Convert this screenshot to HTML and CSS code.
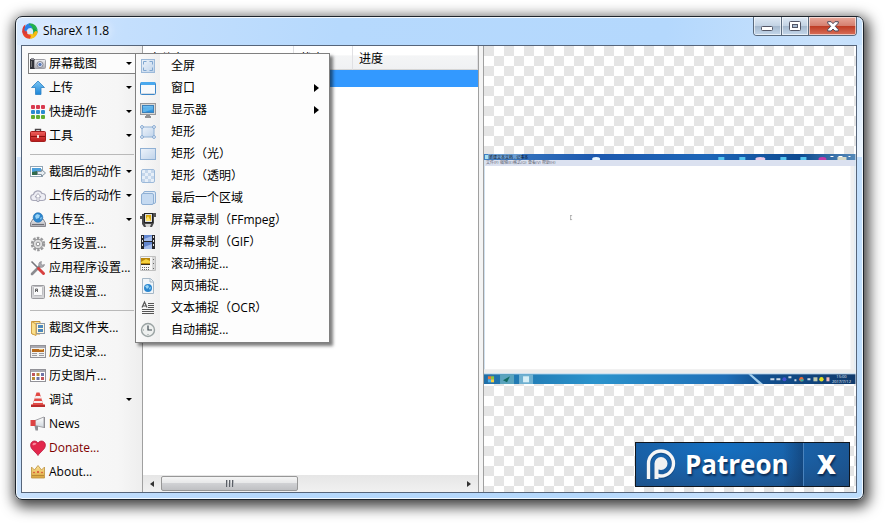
FILE: index.html
```html
<!DOCTYPE html>
<html lang="zh-CN">
<head>
    <meta charset="UTF-8">
    <meta name="viewport" content="width=device-width, initial-scale=1.0">
    <title>ShareX 11.8</title>
    <link rel="stylesheet" href="styles.css">
</head>
<body>
    <!-- shared gradients -->
    <svg class="defs" width="0" height="0" aria-hidden="true">
        <defs>
            <linearGradient id="g-pale" x1="0" y1="0" x2="1" y2="1"><stop offset="0" stop-color="#eef4fb"/><stop offset="1" stop-color="#bfd3ea"/></linearGradient>
            <linearGradient id="g-blue" x1="0" y1="0" x2="0" y2="1"><stop offset="0" stop-color="#7cc6f4"/><stop offset="1" stop-color="#1c86d8"/></linearGradient>
            <linearGradient id="g-grey" x1="0" y1="0" x2="0" y2="1"><stop offset="0" stop-color="#f2f2f4"/><stop offset="1" stop-color="#a9a9b0"/></linearGradient>
            <linearGradient id="g-red" x1="0" y1="0" x2="0" y2="1"><stop offset="0" stop-color="#f0605c"/><stop offset="1" stop-color="#b81818"/></linearGradient>
            <linearGradient id="g-gold" x1="0" y1="0" x2="0" y2="1"><stop offset="0" stop-color="#ffe79a"/><stop offset="1" stop-color="#d9a23a"/></linearGradient>
            <linearGradient id="g-white" x1="0" y1="0" x2="0" y2="1"><stop offset="0" stop-color="#ffffff"/><stop offset="1" stop-color="#cfd6dc"/></linearGradient>
            <linearGradient id="g-task" x1="0" y1="0" x2="1" y2="0"><stop offset="0" stop-color="#1d6fa8"/><stop offset=".3" stop-color="#2b93cc"/><stop offset=".65" stop-color="#1f6fb8"/><stop offset=".75" stop-color="#12508f"/><stop offset="1" stop-color="#103a6c"/></linearGradient>
            <linearGradient id="g-title" x1="0" y1="0" x2="1" y2="0"><stop offset="0" stop-color="#3f7fc4"/><stop offset=".3" stop-color="#1c58ae"/><stop offset=".6" stop-color="#1d66b8"/><stop offset=".85" stop-color="#0d4a90"/><stop offset="1" stop-color="#5589b8"/></linearGradient>
        </defs>
    </svg>

    <div class="window">
        <header class="titlebar">
            <svg class="logo" viewBox="0 0 16 16">
                <path d="M8.500 3.200C12 2.800 14.500 5 15.700 8.500 15 12.500 12 13 10.500 11.500 12 9 11.500 6.500 8.500 3.200z" fill="#14a545"/>
                <path d="M7.500.2C12 .2 15.500 3 15.700 8 14 5.500 11.500 4.800 9 5.300L6 3z" fill="#22b14c"/>
                <path d="M15.700 8.500c-.5 4.500-3.700 7.300-8.200 7.300 2.500-1.300 3.700-2.800 3.700-5.300l2-2.500z" fill="#f5b90d"/>
                <path d="M12.500 13.800C9 16.500 3.500 16.200 1 11.500c2.500 1.300 4.800 1 7-.7l3.200.7z" fill="#fbc31b"/>
                <path d="M8 15.800C3.500 15.700.2 12.500.2 7.500 1.500 9.800 3 11 5.500 10.800l3.500 2z" fill="#e9432d"/>
                <path d="M.2 8.500C.2 5 1.500 2.500 3.500 1.500 2.700 4.500 3.300 7 5.200 9v2.500C2.500 11.500.8 10.500.2 8.500z" fill="#d93a36"/>
                <path d="M2.500 5.500C3 2 5.500.2 9 .2c-1 .5-1.800 1-2.300 1.700 2 .2 3.300 1.300 3.800 3.500C8 4.600 6 5 5 7.500L3 8.500C2.500 7.500 2.400 6.500 2.500 5.500z" fill="#2c82e8"/>
            </svg>
            <h1>ShareX 11.8</h1>
            <div class="controls">
                <button class="min" aria-label="最小化"><svg width="13" height="6" viewBox="0 0 13 6"><rect x=".5" y=".5" width="11" height="4" rx="1" fill="#fff" stroke="#535666"/></svg></button>
                <button class="max" aria-label="最大化"><svg width="13" height="11" viewBox="0 0 13 11"><rect x=".5" y=".5" width="11" height="9" rx="1" fill="#fff" stroke="#535666"/><rect x="3.5" y="3.5" width="5" height="3" fill="#a9bdd3" stroke="#535666"/></svg></button>
                <button class="close" aria-label="关闭"><svg width="12" height="11" viewBox="0 0 12 11"><path d="M.7.7h3.400L6 2.700 7.900.7h3.400v1.400L8.300 5.300l3 3.300V10H7.900L6 8 4.100 10H.7V8.600l3-3.300-3-3.200z" fill="#fff" stroke="#4c4a5c"/></svg></button>
            </div>
        </header>

        <main class="client">
            <nav class="sidebar">
                <ul>
                    <li class="current">
                        <button aria-haspopup="menu" aria-expanded="true">
                            <svg viewBox="0 0 16 16"><rect y="3" width="5" height="10" fill="#33343a"/><rect x="1" y="2" width="3" height="2" fill="#8b8b92"/><rect x="4.500" y="3.500" width="11" height="9" rx="1" fill="url(#g-grey)" stroke="#a0a0a6"/><circle cx="10" cy="8.500" r="3" fill="#eef" stroke="#85888f"/><circle cx="10" cy="8.500" r="1.700" fill="#5c7db5"/><rect x="1" y="5" width="1" height="6" fill="#777"/></svg>
                            屏幕截图<i class="arrow"></i>
                        </button>
                        <ul class="menu">
                            <li><button><svg viewBox="0 0 16 16"><rect x="1.500" y="1.500" width="13" height="13" fill="url(#g-pale)" stroke="#9cb9d9"/><path d="M3.500 6.500v-3h3M9.500 3.500h3v3M12.500 9.500v3h-3M6.500 12.500h-3v-3" fill="none" stroke="#7fa6d0"/></svg>全屏</button></li>
                            <li><button><svg viewBox="0 0 16 16"><rect x=".5" y="2.500" width="15" height="12" rx="1" fill="#f7f9fb" stroke="#3b86c9"/><path d="M1 2h14v3H1z" fill="#49a8ee"/><path d="M1 13h14v1H1z" fill="#d2dae2"/></svg>窗口<i class="sub"></i></button></li>
                            <li><button><svg viewBox="0 0 16 16"><rect x=".5" y="1.500" width="15" height="11" fill="#d8d8d6" stroke="#98989a"/><rect x="2.500" y="3.500" width="11" height="7" fill="url(#g-blue)" stroke="#3d80b8"/><path d="M3 7l10-3v3L5 10H3z" fill="#5db3ea"/><path d="M6 13h4v1h1v2H5v-2h1z" fill="#909092"/></svg>显示器<i class="sub"></i></button></li>
                            <li><button><svg viewBox="0 0 16 16"><path d="M2 3h12v10H2z" fill="url(#g-pale)" stroke="#8fb0d4"/><g fill="#fff" stroke="#7fa4cf"><circle cx="2" cy="3" r="1.400"/><circle cx="14" cy="3" r="1.400"/><circle cx="2" cy="13" r="1.400"/><circle cx="14" cy="13" r="1.400"/></g></svg>矩形</button></li>
                            <li><button><svg viewBox="0 0 16 16"><rect x=".5" y="2.500" width="15" height="11" fill="url(#g-pale)" stroke="#8fb0d4"/></svg>矩形（光）</button></li>
                            <li><button><svg viewBox="0 0 16 16"><rect x="1.500" y="1.500" width="13" height="13" rx="1.500" fill="#e7eff8" stroke="#9cb9d9"/><path d="M5 2h3v3H5zM11 2h3v3h-3zM2 5h3v3H2zM8 5h3v3H8zM5 8h3v3H5zM11 8h3v3h-3zM2 11h3v3H2zM8 11h3v3H8z" fill="#c4d6eb"/></svg>矩形（透明）</button></li>
                            <li><button><svg viewBox="0 0 16 16"><rect x="3.500" y="1.500" width="12" height="12" rx="1.500" fill="#dce8f5" stroke="#8fb0d4"/><rect x="1.500" y="3.500" width="12" height="11" rx="1.500" fill="#c5daf1" stroke="#8fb0d4"/></svg>最后一个区域</button></li>
                            <li><button><svg viewBox="0 0 16 16"><path d="M0 4h3v3H0zM14 1h2v4h-2z" fill="#555"/><path d="M2 2l12-1v10l-2 4H4l-2-3z" fill="#48484a"/><rect x="4.500" y="1.500" width="8" height="9" fill="#dcdcdc" stroke="#222"/><rect x="6" y="3" width="5" height="6" fill="#d9a90c"/><path d="M6 7l2-3 3 5H6z" fill="#ffe36b"/><path d="M5 12h6l-1 3H6z" fill="#d5d5d5"/></svg>屏幕录制（FFmpeg）</button></li>
                            <li><button><svg viewBox="0 0 16 16"><path d="M1 1h14v14H1z" fill="#25262b"/><path d="M4 1h8v6H4zM4 8h8v7H4z" fill="#6286cf"/><path d="M4 5l8-3v5H4zM4 13l8-3v5H4z" fill="#a3bced"/><path d="M2 2h1v2H2zM2 6h1v2H2zM2 10h1v2H2zM13 2h1v2h-1zM13 6h1v2h-1zM13 10h1v2h-1z" fill="#e6e6e6"/></svg>屏幕录制（GIF）</button></li>
                            <li><button><svg viewBox="0 0 16 16"><path d="M.5.5h15v14H.5z" fill="#f6f6f6" stroke="#c0c0c0"/><path d="M1 2h9v7H1z" fill="#b8860b"/><path d="M1 6l5-3 4 2v2H1z" fill="#f5d23d"/><path d="M1 8h9v1H1z" fill="#3b3320"/><path d="M12 1h3v13h-3z" fill="#d9d9d9"/><path d="M13 3h1v1h-1zM13 7h1v1h-1zM13 12h1v1h-1zM2 11h1v1H2zM4 11h1v1H4zM6 11h1v1H6zM8 11h1v1H8zM2 13h1v1H2zM4 13h1v1H4zM6 13h1v1H6zM8 13h1v1H8z" fill="#666"/></svg>滚动捕捉...</button></li>
                            <li><button><svg viewBox="0 0 16 16"><path d="M2.500.5h8l3 3v12h-11z" fill="#f0f5f9" stroke="#a5b7c6"/><path d="M10 1v3h3" fill="none" stroke="#a5b7c6"/><circle cx="8" cy="10" r="4" fill="#2a86cf"/><path d="M5 8l3-1 1 2-2 2zM9 10l2-1-1 3z" fill="#9bd6f6"/></svg>网页捕捉...</button></li>
                            <li><button><svg viewBox="0 0 16 16"><path d="M2 7.500L4.500 2l2.500 5.500M3 6h3" fill="none" stroke="#555" stroke-width="1.200"/><path d="M8 3.500h6M8 5.500h6M8 7.500h6M2 9.500h12M2 11.500h12M2 13.500h12" stroke="#555"/></svg>文本捕捉（OCR）</button></li>
                            <li><button><svg viewBox="0 0 16 16"><circle cx="8" cy="8" r="6.500" fill="#eef0ef" stroke="#9aa3a3" stroke-width="1.400"/><path d="M8 3.500V8h4" fill="none" stroke="#3e4a50" stroke-width="1.200"/><path d="M3 8h1M8 12v1" stroke="#8a9494"/></svg>自动捕捉...</button></li>
                        </ul>
                    </li>
                    <li><button><svg viewBox="0 0 16 16"><path d="M8 1l6.500 6.500H11V14.500H5.500V7.500H1.500z" fill="url(#g-blue)" stroke="#2d82c4" stroke-width=".8"/></svg>上传<i class="arrow"></i></button></li>
                    <li><button><svg viewBox="0 0 16 16"><g fill="#d93a4e"><rect x="1" y="1" width="4" height="4" rx="1"/><rect x="6" y="1" width="4" height="4" rx="1"/><rect x="11" y="1" width="4" height="4" rx="1"/></g><g fill="#2b8bd0"><rect x="1" y="6" width="4" height="4" rx="1"/><rect x="6" y="6" width="4" height="4" rx="1"/><rect x="11" y="6" width="4" height="4" rx="1"/></g><g fill="#62ad30"><rect x="1" y="11" width="4" height="4" rx="1"/><rect x="6" y="11" width="4" height="4" rx="1"/><rect x="11" y="11" width="4" height="4" rx="1"/></g></svg>快捷动作<i class="arrow"></i></button></li>
                    <li><button><svg viewBox="0 0 16 16"><path d="M5.500 4V1.500h5V4" fill="none" stroke="#4b4648" stroke-width="1.400"/><rect x=".5" y="3.500" width="15" height="10" rx="1" fill="url(#g-red)" stroke="#a31d1d"/><path d="M1 8.500h14" stroke="#8c1010"/><path d="M7 7h2v3H7z" fill="#f4e3e0"/></svg>工具<i class="arrow"></i></button></li>
                    <li class="separator"></li>
                    <li><button><svg viewBox="0 0 16 16"><rect x=".5" y="2.500" width="12" height="10" fill="#fff" stroke="#93a6b5"/><path d="M2 4h9v4H2z" fill="#4da0dc"/><path d="M2 8l5-1 4 2v2H2z" fill="#336b4c"/><path d="M7.500 7.500h4v-2l4 3.500-4 3.500v-2h-4z" fill="#e8eef2" stroke="#82929e"/></svg>截图后的动作<i class="arrow"></i></button></li>
                    <li><button><svg viewBox="0 0 16 16"><path d="M4 12.500a3 3 0 0 1-.5-6 4.500 4.500 0 0 1 8.500-1 3.500 3.500 0 0 1 .5 7z" fill="#eeeef4" stroke="#a8a8b8" stroke-width="1.200"/><path d="M8 5.500l3 3.500H9v4.500H7V9H5z" fill="#fff" stroke="#9a9aac" stroke-width=".8"/></svg>上传后的动作<i class="arrow"></i></button></li>
                    <li><button><svg viewBox="0 0 16 16"><path d="M3 7h10l2.500 4v3.500H.5V11z" fill="url(#g-grey)" stroke="#898990"/><circle cx="8" cy="5.500" r="4.800" fill="#2c86ce" stroke="#2470b0" stroke-width=".6"/><path d="M5 4l2-2 3 1-1 3-3 1zM10 6l2-1-1 3z" fill="#97d2f5"/><path d="M2 12.500h12" stroke="#6d6d74"/></svg>上传至...<i class="arrow"></i></button></li>
                    <li><button><svg viewBox="0 0 16 16"><circle cx="8" cy="8" r="6" fill="none" stroke="#99999b" stroke-width="2.400" stroke-dasharray="2.500 1.270"/><circle cx="8" cy="8" r="4.700" fill="#dedede" stroke="#909092"/><circle cx="8" cy="8" r="1.800" fill="#fff" stroke="#909092"/></svg>任务设置...</button></li>
                    <li><button><svg viewBox="0 0 16 16"><path d="M2 14l8-8" stroke="#8b8b8f" stroke-width="2.600" stroke-linecap="round"/><path d="M14.500 4.500a3 3 0 0 1-4.500 2.500 3 3 0 0 1 1.500-5.500L11 4l1.500 1z" fill="#aaaab0" stroke="#77777c" stroke-width=".5"/><path d="M1.500 1.500L8 8" stroke="#77777c" stroke-width="1.600"/><path d="M8.500 8.500l5 5" stroke="#d84040" stroke-width="3" stroke-linecap="round"/></svg>应用程序设置...</button></li>
                    <li><button><svg viewBox="0 0 16 16"><rect x="1.500" y="1.500" width="13" height="13" rx="1" fill="#d5d5d7" stroke="#9b9b9f"/><rect x="3.500" y="2.500" width="9" height="9" rx="1" fill="#fafafa" stroke="#bcbcc0"/><path d="M5.500 8V5h2v3M5.500 6.500h2" fill="none" stroke="#666"/></svg>热键设置...</button></li>
                    <li class="separator"></li>
                    <li><button><svg viewBox="0 0 16 16"><path d="M2 1.500h8V14H2z" fill="url(#g-gold)" stroke="#c9973b"/><rect x="6.500" y="3.500" width="8" height="10" fill="#fff8dc" stroke="#8c98a8"/><path d="M8 5h5v3H8zM8 9h5v3H8z" fill="#4d88bd"/><path d="M1.500 1.500L6 4v11.500l-4.500-2z" fill="#fbe08c" stroke="#cfa048"/></svg>截图文件夹...</button></li>
                    <li><button><svg viewBox="0 0 16 16"><rect x=".5" y="1.500" width="15" height="12" fill="#f2f2f2" stroke="#929298"/><path d="M1 2h14v2H1z" fill="#a9a9b0"/><path d="M2 5h12v3H2z" fill="#b86a1b"/><path d="M9 5h4v1H9z" fill="#f2c270"/><path d="M2 9.500h5M2 11.500h5M9 9.500h5M9 11.500h5" stroke="#9c9ca0"/></svg>历史记录...</button></li>
                    <li><button><svg viewBox="0 0 16 16"><rect x=".5" y="1.500" width="15" height="12" fill="#fff" stroke="#929298"/><path d="M1 2h14v2H1z" fill="#a9a9b0"/><path d="M2 5h3v3H2zM11 9h3v3h-3z" fill="#c0565c"/><path d="M6.500 5h3v3h-3zM2 9h3v3H2z" fill="#bb8a36"/><path d="M11 5h3v3h-3zM6.500 9h3v3h-3z" fill="#6d74a6"/></svg>历史图片...</button></li>
                    <li><button><svg viewBox="0 0 16 16"><path d="M1 12.500h14v2.500H1z" fill="#b92c2c"/><path d="M6.500 .5h3L13.500 13h-11z" fill="#e24a45"/><path d="M5.500 4h5l.9 2.500H4.700zM4 9h8.200l.7 2H3.300z" fill="#f4f0f0"/></svg>调试<i class="arrow"></i></button></li>
                    <li><button><svg viewBox="0 0 16 16"><path d="M5 4.500l9-3.500v10.500L5 9.500z" fill="url(#g-white)" stroke="#a3a3a8"/><path d="M.5 4h5v6h-5z" fill="#dd4343"/><path d="M4.500 10h3.500v4.500H5.500z" fill="#8e8e94"/><path d="M14.500 1v11" stroke="#8e8e94"/></svg>News</button></li>
                    <li><button class="donate"><svg viewBox="0 0 16 16"><path d="M8 15.500C6 12 .6 9.500.6 5.200.6.6 6.300-.4 8 3.300 9.700-.4 15.400.6 15.400 5.200 15.400 9.500 10 12 8 15.500z" fill="#e3274c" stroke="#b91c40" stroke-width=".8"/><path d="M2.500 5c0-2.500 2.500-3 4-1.500C5.500 5 4 5.500 2.500 5z" fill="#f78a9e"/></svg>Donate...</button></li>
                    <li><button><svg viewBox="0 0 16 16"><path d="M1.500 3l3 3L8 1.500 11.500 6l3-3v11h-13z" fill="url(#g-gold)" stroke="#c2994a" stroke-width=".9"/><path d="M2 11.500h12" stroke="#b98a35"/><circle cx="8" cy="8" r="1" fill="#d64530"/><circle cx="4" cy="8.500" r=".8" fill="#d64530"/><circle cx="12" cy="8.500" r=".8" fill="#d64530"/></svg>About...</button></li>
                </ul>
            </nav>

            <section class="tasks">
                <table>
                    <colgroup><col class="col-name"><col class="col-status"><col></colgroup>
                    <thead>
                        <tr><th>文件名</th><th>状态</th><th>进度</th></tr>
                    </thead>
                    <tbody>
                        <tr class="selected"><td></td><td></td><td></td></tr>
                    </tbody>
                </table>
                <div class="scrollbar">
                    <button aria-label="向左滚动"><i class="left"></i></button>
                    <div class="track"><div class="thumb"><i></i><i></i><i></i></div></div>
                    <button aria-label="向右滚动"><i class="right"></i></button>
                </div>
            </section>

            <div class="splitter"></div>

            <section class="preview">
                <svg class="shot" viewBox="0 0 372 230" role="img" aria-label="截图预览">
                    <rect width="372" height="230" fill="#fff"/>
                    <rect width="371" height="6" fill="url(#g-title)"/>
                    <rect x="1" y="1" width="3" height="4" fill="#a9e0f0"/>
                    <rect x="4" y="0" width="34" height="5" fill="#8fb9e0" opacity=".6"/>
                    <text x="5" y="5" font-size="4" fill="#06101c">新建文本文档 - 记事本</text>
                    <ellipse cx="112" cy="5" rx="4" ry="2" fill="#e9f6ff"/>
                    <g fill="#54c4ee"><rect x="234" y="3" width="6" height="3"/><rect x="255" y="3" width="6" height="3"/><rect x="296" y="3" width="6" height="3"/><rect x="316" y="3" width="6" height="3"/></g>
                    <ellipse cx="276" cy="5" rx="5" ry="2" fill="#e7c9e6"/>
                    <ellipse cx="338" cy="5" rx="4" ry="2" fill="#c23aa8"/>
                    <path d="M346 2.500h3M354 2.500h4M364 2.500h2" stroke="#fff"/>
                    <rect x="353" y="3" width="9" height="3" fill="#d6d9c8"/>
                    <rect y="6" width="371" height="6" fill="#dbe1f0"/>
                    <g font-size="4" fill="#5c6270"><text x="2" y="10">文件(F)</text><text x="16" y="10">编辑(E)</text><text x="29" y="10">格式(O)</text><text x="44" y="10">查看(V)</text><text x="58" y="10">帮助(H)</text></g>
                    <path d="M86 61.500h2M86 65.500h2M86.500 61v5" stroke="#a5a5a5" stroke-width=".8" fill="none"/>
                    <rect x="366" y="12" width="4" height="204" fill="#f0f0f0"/>
                    <path d="M.5 6v214M370.500 6v214" stroke="#cfe0ef"/>
                    <rect y="215" width="371" height="4" fill="#ececec"/>
                    <rect y="219" width="371" height="1" fill="#bcd6ea"/>
                    <rect y="220" width="371" height="10" fill="url(#g-task)"/>
                    <rect x="16" y="220" width="14" height="10" fill="#5aa3bd"/>
                    <rect x="35" y="220" width="14" height="10" fill="#6fb0d0"/>
                    <circle cx="7" cy="225" r="4.500" fill="#2f72a8"/>
                    <path d="M4 222h3v3H4z" fill="#e8743a"/><path d="M7 222h3v3H7z" fill="#8cc63f"/><path d="M4 225h3v3H4z" fill="#4ab0ea"/><path d="M7 225h3v3H7z" fill="#f4cf3e"/>
                    <path d="M19 226l7-4-3 6z" fill="#116b62"/><rect x="39" y="222" width="6" height="6" fill="#d5eef6"/>
                    <path d="M264 220h3l12 10h-4z" fill="#a5d0ee"/>
                    <path d="M286 225h4M292 225h4M304 223h3M310 226h2M323 225h3" stroke="#cfdbe8" stroke-width="2"/>
                    <circle cx="300" cy="225" r="2" fill="#4453d0"/><circle cx="317" cy="225" r="2.200" fill="#ea6a3a"/><path d="M316 225h3v2h-3z" fill="#36b3a0"/>
                    <rect x="329" y="223" width="4" height="4" fill="#c0c9ae"/><circle cx="337" cy="225" r="2.200" fill="#e3df22"/><path d="M342 223h3v4h-3z" fill="#f2b8b8"/>
                    <g font-size="4" fill="#e6eef6" text-anchor="middle"><text x="357" y="224">15:00</text><text x="357" y="229">2017/7/12</text></g>
                </svg>
                <div class="patreon">
                    <a href="#">
                        <svg width="30" height="32" viewBox="0 0 30 32" fill="none">
                            <path d="M2.500 30V15.500a12.500 12.500 0 1 1 12.500 12.500" stroke="#0c3260" stroke-opacity=".4" stroke-width="4"/>
                            <path d="M2.500 30V14.500a12.500 12.500 0 1 1 12.500 12.500c-1.500 0-3-.2-4.500-.8" stroke="#f6f6f6" stroke-width="3.400"/>
                            <path d="M8.500 30V14.500a6.500 6.500 0 1 1 6.500 6.500c-.9 0-1.700-.2-2.500-.5V30z" fill="#f2f2f2"/>
                        </svg>
                        Patreon
                    </a>
                    <button>X</button>
                </div>
            </section>
        </main>
    </div>
</body>
</html>
```

FILE: styles.css
```css
* {
    box-sizing: border-box;
}
body {
    margin: 0;
    padding: 16px 26px 24px 15px;
    min-height: 100vh;
    display: flex;
    background: #fff;
    color: #000;
    font-family: "Open Sans", "Noto Sans CJK SC", sans-serif;
    font-size: 12px;
    line-height: 16px;
}
.defs {
    position: absolute;
}
ul {
    list-style: none;
    margin: 0;
    padding: 0;
}
button {
    font: inherit;
    color: inherit;
    margin: 0;
    padding: 0;
    border: none;
    background: none;
}

/* window frame */
.window {
    flex: 1;
    min-width: 0;
    display: flex;
    flex-direction: column;
    padding: 0 6px 6px 5px;
    border: 1px solid #1d242c;
    border-radius: 7px;
    background:
        linear-gradient(rgba(255, 255, 255, 0.2), rgba(255, 255, 255, 0.7)) left 28px / 6px 112px no-repeat,
        linear-gradient(rgba(255, 255, 255, 0.2), rgba(255, 255, 255, 0.7)) right 28px / 6px 112px no-repeat,
        linear-gradient(100deg, #d9eaff 0, #c4dffd 12%, #b6d9fd 35%, #b4d8fd 70%, #c9e2fc 88%, #bbdcfc 100%);
    box-shadow: inset 0 0 0 1px #f2f9ff, 2px 4px 14px 3px rgba(0, 0, 0, 0.75);
}
.titlebar {
    display: flex;
    align-items: center;
    gap: 5px;
    height: 28px;
    padding-left: 1px;
}
.titlebar h1 {
    margin: 0;
    font-size: 12px;
    font-weight: 400;
    text-shadow: 0 0 8px #fff, 0 0 12px #fff;
}
.logo {
    width: 16px;
    height: 16px;
}
.controls {
    display: flex;
    align-self: flex-start;
    margin-left: auto;
    border: 1px solid #5a6a7d;
    border-top: none;
    border-radius: 0 0 4px 4px;
    overflow: hidden;
}
.controls button {
    display: flex;
    align-items: center;
    justify-content: center;
    width: 27px;
    height: 18px;
    border-right: 1px solid #5a6a7d;
    background: linear-gradient(#dfeaf5, #c3d3e4 48%, #a3b7cc 50%, #c5d8ec);
    box-shadow: inset 0 0 0 1px rgba(255, 255, 255, 0.6);
}
.controls .min {
    width: 28px;
    padding-top: 5px;
}
.controls .close {
    width: 47px;
    border-right: none;
    background: linear-gradient(#e9aa9c, #d58070 48%, #bd3a22 50%, #d9705a);
}

.client {
    flex: 1;
    display: grid;
    grid-template-columns: 121px minmax(0, 336fr) 4px minmax(0, 374fr);
    border: 1px solid #56657a;
    background: #fff;
}

/* sidebar */
.sidebar {
    padding: 6px 6px 4px;
    border-right: 1px solid #a0a0a0;
    background: linear-gradient(90deg, #fafafa, #f6f6f6 80%, #eeeeee);
}
.sidebar li {
    position: relative;
    height: 24px;
}
.sidebar button {
    display: flex;
    align-items: center;
    gap: 3px;
    width: 100%;
    height: 23px;
    padding: 0 4px 0 2px;
    white-space: nowrap;
    text-align: left;
}
.sidebar button svg {
    flex: none;
    width: 16px;
    height: 16px;
}
.sidebar .current {
    padding-top: 1px;
}
.sidebar .current > button {
    height: 21px;
    padding-left: 1px;
    border: 1px solid #808080;
    border-right: none;
    background: #fcfcfc;
}
.sidebar .donate {
    color: #800000;
}
.sidebar .separator {
    height: 12px;
    margin: 0 2px;
    padding-top: 6px;
}
.separator::before {
    content: "";
    display: block;
    border-top: 1px solid #b9b9b9;
}
.arrow {
    margin-left: auto;
    border: 3px solid transparent;
    border-top-color: #000;
    border-bottom: none;
}

/* drop-down menu */
.menu {
    position: absolute;
    z-index: 1;
    top: 1px;
    left: calc(100% - 1px);
    width: 195px;
    padding: 1px 0;
    border: 1px solid #808080;
    background: linear-gradient(90deg, #fbfbfb, #efefef 24px, #fdfdfd 24px);
    box-shadow: 3px 3px 3px rgba(0, 0, 0, 0.5);
}
.sidebar .menu li,
.sidebar .menu button {
    height: 22px;
}
.sidebar .menu button {
    gap: 15px;
    padding: 0 10px 0 4px;
}
.sub {
    margin-left: auto;
    border: 4px solid transparent;
    border-left: 5px solid #000;
    border-right: none;
}

/* task list */
.tasks {
    display: flex;
    flex-direction: column;
    justify-content: space-between;
    border-right: 1px solid #a0a0a0;
}
table {
    width: 100%;
    table-layout: fixed;
    border-collapse: separate;
    border-spacing: 0;
}
.col-name {
    width: 151px;
}
.col-status {
    width: 59px;
}
th {
    height: 24px;
    padding: 2px 6px 0;
    border-right: 1px solid #e0e0e3;
    border-bottom: 1px solid #d5d5d5;
    background: linear-gradient(#fff 40%, #f4f5f6 42%, #f0f1f3);
    font-weight: 400;
    text-align: left;
}
td {
    height: 17px;
    padding: 0;
}
.selected {
    background: #3399ff;
}
.scrollbar {
    display: flex;
    height: 17px;
    background: linear-gradient(#e6e6e6, #f1f1f1);
}
.scrollbar button {
    display: flex;
    align-items: center;
    justify-content: center;
    width: 18px;
}
.track {
    flex: 1;
    display: flex;
}
.thumb {
    display: flex;
    align-items: center;
    justify-content: center;
    gap: 1px;
    width: 46%;
    height: 15px;
    margin-top: 1px;
    border: 1px solid #979797;
    border-radius: 2px;
    background: linear-gradient(#f5f5f5, #e6e7e8 48%, #d0d1d4 50%, #bfc0c3);
}
.thumb i {
    width: 2px;
    height: 7px;
    background: linear-gradient(90deg, #5c6067 50%, #b9bcc0 50%);
}
.left,
.right {
    border: 3px solid transparent;
}
.left {
    border-right: 4px solid #333;
    border-left: none;
}
.right {
    border-left: 4px solid #333;
    border-right: none;
}

.splitter {
    background: #f4f4f4;
}

/* preview pane */
.preview {
    position: relative;
    display: flex;
    align-items: center;
    border-left: 1px solid #a0a0a0;
    background: repeating-conic-gradient(#fff 0 25%, #e5e5e5 0 50%) 0 0 / 20px 20px;
}
.shot {
    width: 100%;
    height: auto;
}
.patreon {
    position: absolute;
    right: 6px;
    bottom: 5px;
    display: flex;
    width: 215px;
    height: 45px;
    border: 1px solid #10161e;
    background: radial-gradient(ellipse at 40% 10%, #1470c2, #1a5fa4 50%, #1d4c80 100%);
    color: #fff;
    font-size: 26px;
    font-weight: 700;
    line-height: 43px;
    text-shadow: 1px 2px 2px rgba(0, 20, 50, 0.7);
}
.patreon a {
    flex: 1;
    display: flex;
    align-items: center;
    gap: 9px;
    padding-left: 10px;
    color: inherit;
    text-decoration: none;
    background: linear-gradient(90deg, transparent 88%, rgba(10, 40, 80, 0.4));
}
.patreon button {
    width: 46px;
    border-left: 1px solid #4a83bd;
    font-weight: 800;
    text-shadow: inherit;
}
```
